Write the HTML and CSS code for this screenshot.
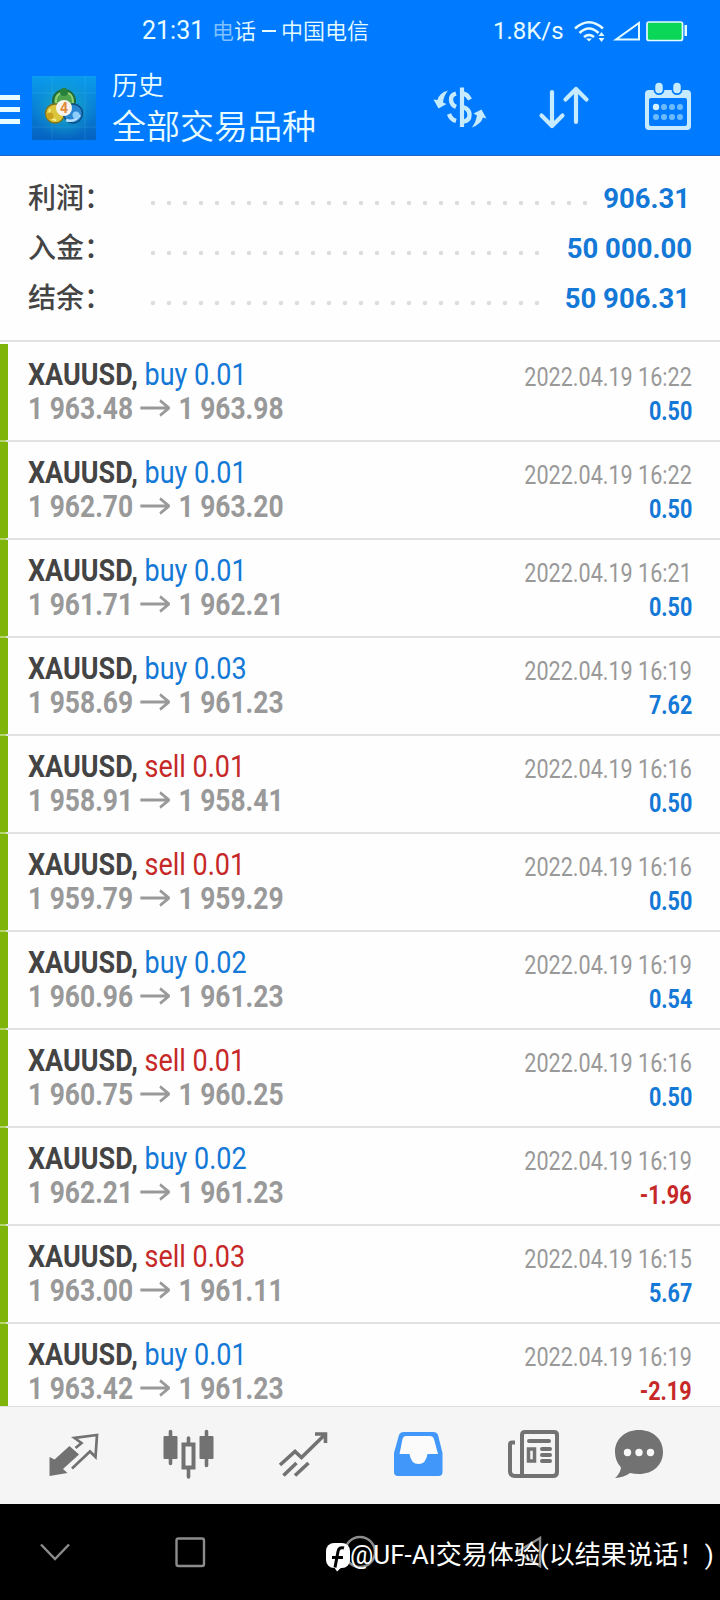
FILE: index.html
```html
<!DOCTYPE html>
<html lang="zh-CN">
<head>
<meta charset="utf-8">
<title>历史</title>
<link rel="stylesheet" href="styles.css">
</head>
<body>
<div class="screen">
  <header class="header">
    <div class="status">
      <span class="clock">21:31</span>
      <span class="carrier"><span class="faded">电</span>话<span class="dash"></span>中国电信</span>
      <span class="speed">1.8K/s</span>
      <svg class="status-icons" width="116" height="24" viewBox="572 18 116 24">
        <g fill="none" stroke="#e4fbff" stroke-width="2.6">
          <path d="M575 27.500Q589 15 603 27.500M579.500 32Q589 23 598.500 32M584 36Q589 32 594 36"/>
          <path d="M616 38.500 639 22V38.500Z" stroke-width="2"/>
        </g>
        <path d="M586 37.500h6l-3 3zM598.500 35l3-4 3 4zM598.500 37l3 4 3-4z" fill="#e4fbff"/>
        <rect x="647" y="21" width="35.500" height="18.500" rx="2" fill="#0ad658" stroke="#e4fbff" stroke-width="1.700"/>
        <rect x="684.500" y="24" width="2.500" height="11" fill="#e4fbff"/>
      </svg>
    </div>
    <div class="toolbar">
      <svg class="burger" width="20" height="30" viewBox="0 0 20 30"><path d="M0 2.500h20M0 14.500h20M0 26.500h20" stroke="#e8fcff" stroke-width="5"/></svg>
      <svg class="logo" width="64" height="64" viewBox="0 0 64 64">
        <defs>
          <linearGradient id="sky" x1="0" y1="0" x2="0" y2="1"><stop offset="0" stop-color="#0a9cec"/><stop offset="1" stop-color="#0562c0"/></linearGradient>
          <radialGradient id="glow"><stop offset="0" stop-color="#18b4b8"/><stop offset="1" stop-color="#18a0d0" stop-opacity="0"/></radialGradient>
        </defs>
        <rect width="64" height="64" fill="url(#sky)"/>
        <rect width="64" height="64" fill="url(#glow)"/>
        <path d="M0 17h64M0 51h64M20 0v64M53 0v64" stroke="#5bc3ed" stroke-opacity=".2" fill="none"/>
        <circle cx="32" cy="25" r="11" fill="#4ea34c" stroke="#1f6b3b" stroke-width="2"/>
        <path d="M24 27Q23 17 32 16.500T41 27" fill="none" stroke="#8fce70" stroke-width="2"/>
        <circle cx="23" cy="37.500" r="9.500" fill="#dbc63b" stroke="#7d7420" stroke-width="1.500"/>
        <path d="M18 33Q15 43 24 44" fill="none" stroke="#f5eb86" stroke-width="2"/>
        <circle cx="41" cy="37.500" r="9.500" fill="#2b86d2" stroke="#0b4d84" stroke-width="1.500"/>
        <path d="M34 44q8 3 14-5" stroke="#b7e2ff" stroke-width="2.500" fill="none"/>
        <circle cx="32" cy="16" r="4" fill="#27813d"/><circle cx="18" cy="40" r="3.500" fill="#c9a21d"/><circle cx="44" cy="39" r="3.500" fill="#8ccdfb"/>
        <circle cx="32" cy="32" r="8" fill="#f6f3ec"/>
        <text class="logo-digit" x="32" y="37" text-anchor="middle">4</text>
      </svg>
      <div class="titles"><div class="title-small">历史</div><div class="title-big">全部交易品种</div></div>
      <svg class="actions" width="260" height="52" viewBox="432 80 260 52">
        <g fill="none" stroke="#c6eafe" stroke-width="4.400">
          <path d="M462 87.500V127" stroke-width="4.200"/>
          <path d="M470 99.500Q467 94 463 93.500M456 93.500Q450.500 95 451 100T456 107M463 107Q469.500 109 469.500 115T463 121.500M456 121Q451 119.500 449 114"/>
        </g>
        <path d="M448 90.500Q439 93 437.500 100L433.500 99.500 438.500 108.500 446.500 104 443 102.500Q443.500 96 448 90.500ZM472 127.500Q481 124 483 117.500L486.500 118.500 481.500 109.500 473.500 113.500 477 115.500Q476 122 472 127.500Z" fill="#c6eafe"/>
        <path d="M552 92V126M541.500 115.500 552 126 562.500 115.500M576 122V89M565.500 99.500 576 89 586.500 99.500" fill="none" stroke="#c6eafe" stroke-width="4.200" stroke-linecap="round" stroke-linejoin="round"/>
        <path fill-rule="evenodd" d="M649 90H687Q691 90 691 94V126Q691 130 687 130H649Q645 130 645 126V94Q645 90 649 90ZM651 98Q649 98 649 100V123.500Q649 126 651 126H685Q687 126 687 123.500V100Q687 98 685 98Z" fill="#c6eafe"/>
        <path d="M659 86.500v3M677 86.500v3" stroke="#007bff" stroke-width="11" stroke-linecap="round"/>
        <path d="M659 86.500v3M677 86.500v3" stroke="#c6eafe" stroke-width="7.500" stroke-linecap="round"/>
        <g fill="#6dbbfc"><circle cx="656" cy="107" r="3.200" fill="#d4f1ff"/><circle cx="664" cy="107" r="3"/><circle cx="672" cy="107" r="3"/><circle cx="680" cy="107" r="3"/><circle cx="656" cy="117" r="3"/><circle cx="664" cy="117" r="3"/><circle cx="672" cy="117" r="3"/><circle cx="680" cy="117" r="3"/></g>
      </svg>
    </div>
  </header>

  <section class="summary">
    <div class="sum-row"><span class="sum-label">利润：</span><span class="dots long"></span><span class="sum-value inset">906.31</span></div>
    <div class="sum-row"><span class="sum-label">入金：</span><span class="dots"></span><span class="sum-value">50 000.00</span></div>
    <div class="sum-row"><span class="sum-label">结余：</span><span class="dots"></span><span class="sum-value inset">50 906.31</span></div>
  </section>

  <main class="deals" id="deals"></main>

  <nav class="tabs">
    <svg width="720" height="98" viewBox="0 1406 720 98">
      <path d="M0 1406.500H720" stroke="#e0e0e0"/>
      <g fill="#727272">
        <path d="M49.500 1457 54.500 1459.500 69.500 1446 79 1454.500 63 1469 67.500 1473 49.500 1476Z"/>
        <path d="M72 1468.500 90 1451.500 95.500 1457 97 1435 74.500 1438 81.500 1443 75.500 1448" fill="none" stroke="#727272" stroke-width="2.700"/>
        <rect x="163.500" y="1436" width="14" height="23" rx="1"/><rect x="199.500" y="1436" width="14" height="23" rx="1"/>
        <path d="M170.500 1431.500v32M206.500 1431.500v34M188.500 1438v6M188.500 1468v9" stroke="#727272" stroke-width="3.600" stroke-linecap="round"/>
        <rect x="183.500" y="1444.500" width="10" height="23" fill="#f5f5f5" stroke="#727272" stroke-width="4"/>
        <path d="M280 1465 295 1451.500 301.500 1457.500 325 1434.500M315 1434h10.500V1443M283.500 1475.500 296.500 1463M295 1475.500 308.500 1463" fill="none" stroke="#727272" stroke-width="3.600"/>
      </g>
      <path d="M404 1432H433Q437 1432 438 1435L442.500 1453V1472Q442.500 1476 438.500 1476H398Q394 1476 394 1472V1453L399 1435Q400 1432 404 1432Z" fill="#4198fa"/>
      <path d="M406 1436H430Q433 1436 434 1439L438 1454H427.500Q426 1464 418.500 1464T409.500 1454H399.500L402.500 1439Q403.500 1436 406 1436Z" fill="#fbfbfb"/>
      <g fill="none" stroke="#727272" stroke-width="4">
        <path d="M515 1442.500h-3q-2 0-2 2V1471q0 5 5 5H553q4 0 4-4V1435q0-3-3-3H525q-3 0-3 3V1476"/>
        <path d="M529 1441h20M542 1449h8M542 1455h8M542 1461h8" stroke-linecap="round"/>
        <rect x="528.500" y="1449" width="6" height="12" stroke-width="3.500"/>
      </g>
      <path d="M639 1430C653 1430 663 1439 663 1452S653 1474 639 1474C636 1474 633 1473.500 630 1473Q624 1477.500 615 1478Q620 1474 621 1467.500Q615 1461 615 1452C615 1439 625 1430 639 1430Z" fill="#727272"/>
      <g fill="#f8f8f8"><circle cx="627.500" cy="1452.500" r="3.700"/><circle cx="639" cy="1452.500" r="3.700"/><circle cx="650.500" cy="1452.500" r="3.700"/></g>
    </svg>
  </nav>

  <footer class="sysnav">
    <svg width="720" height="96" viewBox="0 1504 720 96">
      <g fill="none" stroke="#8c8c8c" stroke-width="2.400">
        <path d="M41 1544.500 55 1559 69 1544.500"/>
        <rect x="176.500" y="1538.500" width="27.500" height="27.500" rx="2"/>
        <circle cx="360" cy="1552" r="15"/>
        <path d="M540 1538 517 1552 540 1566Z"/>
      </g>
      <rect x="326" y="1543" width="24" height="25" rx="8" fill="#fff"/>
      <path d="M334 1567h8l-5 4.500z" fill="#fff"/>
      <path d="M344 1548q-5-1.500-6 3.500l-3 16M332 1557.500h11" fill="none" stroke="#000" stroke-width="3"/>
    </svg>
    <span class="watermark">@UF-AI交易体验(以结果说话！)</span>
  </footer>
</div>
<script src="deals.js"></script>
</body>
</html>
```
FILE: styles.css
```css
* { box-sizing: border-box; }
body { margin: 0; background: #000; font-family: Roboto, "Noto Sans CJK SC", sans-serif; }
svg { display: block; flex: none; }
.screen { width: 720px; height: 1600px; display: flex; flex-direction: column; overflow: hidden; background: #fefefe; }

.header { height: 156px; flex: none; background: #007bff; border-bottom: 1px solid #1a66cc; color: #e8fcff; }
.status { height: 62px; display: flex; align-items: center; font-size: 25px; line-height: 62px; white-space: nowrap; }
.clock { width: 70px; margin-left: 142px; }
.carrier { width: 281px; height: 62px; line-height: 58px; font-family: "Noto Sans CJK SC", sans-serif; font-size: 22px; font-weight: 350; }
.faded { opacity: .55; }
.dash { display: inline-block; width: 14px; height: 2px; margin: 0 5.500px; vertical-align: 7px; background: #e8fcff; }
.speed { width: 79px; font-size: 24px; }
.toolbar { display: flex; height: 90px; align-items: flex-start; }
.burger { margin-top: 33px; }
.logo { margin: 14px 0 0 12px; }
.logo-digit { font: bold 14px Roboto, sans-serif; fill: #e08a3a; }
.titles { margin-left: 16px; width: 320px; font-family: "Noto Sans CJK SC", sans-serif; font-weight: 350; white-space: nowrap; }
.title-small { font-size: 26px; line-height: 38px; margin-top: 3px; }
.title-big { font-size: 34px; line-height: 44px; }
.actions { margin-top: 18px; }

.summary { height: 186px; flex: none; padding-top: 16px; border-bottom: 2px solid #e2e2e2; }
.sum-row { height: 50px; display: flex; align-items: center; padding: 0 28px 0 28px; line-height: 50px; }
.sum-label { width: 117px; height: 50px; font: 500 28px/48px "Noto Sans CJK SC", sans-serif; color: #444; white-space: nowrap; }
.dots { width: 400px; height: 16px; margin-top: 12px; background: radial-gradient(circle, #dcdcdc 1.8px, transparent 2.6px) 0 0 / 16px 16px; }
.dots.long { width: 448px; }
.sum-value { margin-left: auto; height: 50px; font-size: 27.500px; line-height: 53px; font-weight: 700; color: #1378d6; white-space: nowrap; }
.sum-value.inset { margin-right: 2px; }

.deals { height: 1064px; flex: none; overflow: hidden; padding-top: 2px; }
.deal { height: 98px; padding: 14px 28px 0 28px; border-bottom: 2px solid #e2e2e2; background: linear-gradient(#7fb40a, #7fb40a) 0 0 / 8px 100% no-repeat padding-box; border-image: linear-gradient(90deg, #b4d66c 8px, #e2e2e2 8px) 2; border-width: 0 0 2px; }
.line { display: flex; justify-content: space-between; height: 34px; line-height: 34px; white-space: nowrap; }
.left, .right { display: block; }
.left { transform: scaleX(.843); transform-origin: left; font-size: 32px; line-height: 32px; }
.right { transform: scaleX(.83); transform-origin: right; font-size: 26px; line-height: 38px; }
.symbol { font-weight: 700; color: #444; }
.buy { color: #1378d6; }
.sell { color: #c62828; }
.prices { transform: scaleX(.825); font-weight: 700; color: #999; display: flex; }
.arrow { margin: 0 10px 0 9px; }
.date { color: #999; }
.profit { font-weight: 700; }

.tabs { height: 98px; flex: none; background: #f5f5f5; }
.sysnav { position: relative; height: 96px; flex: none; background: #000; }
.watermark { position: absolute; left: 350px; top: 31px; font: 400 26px/40px Roboto, "Noto Sans CJK SC", sans-serif; color: #fff; white-space: nowrap; }
```
FILE: deals.js
```js
const deals = [
  ["buy", "0.01", "1 963.48", "1 963.98", "16:22", "0.50"],
  ["buy", "0.01", "1 962.70", "1 963.20", "16:22", "0.50"],
  ["buy", "0.01", "1 961.71", "1 962.21", "16:21", "0.50"],
  ["buy", "0.03", "1 958.69", "1 961.23", "16:19", "7.62"],
  ["sell", "0.01", "1 958.91", "1 958.41", "16:16", "0.50"],
  ["sell", "0.01", "1 959.79", "1 959.29", "16:16", "0.50"],
  ["buy", "0.02", "1 960.96", "1 961.23", "16:19", "0.54"],
  ["sell", "0.01", "1 960.75", "1 960.25", "16:16", "0.50"],
  ["buy", "0.02", "1 962.21", "1 961.23", "16:19", "-1.96"],
  ["sell", "0.03", "1 963.00", "1 961.11", "16:15", "5.67"],
  ["buy", "0.01", "1 963.42", "1 961.23", "16:19", "-2.19"]
];
const arrow = '<svg class="arrow" width="36" height="34" viewBox="0 0 36 34"><path d="M0 16h34M24 8.500 35 16 24 23.500" fill="none" stroke="#999" stroke-width="3"/></svg>';
document.getElementById("deals").innerHTML = deals.map(([side, lot, open, close, time, profit]) => `
  <article class="deal">
    <div class="line"><span class="left"><span class="symbol">XAUUSD,</span> <span class="${side}">${side} ${lot}</span></span><span class="right date">2022.04.19 ${time}</span></div>
    <div class="line"><span class="left prices">${open}${arrow}${close}</span><span class="right profit ${profit[0] === "-" ? "sell" : "buy"}">${profit}</span></div>
  </article>`).join("");
```
